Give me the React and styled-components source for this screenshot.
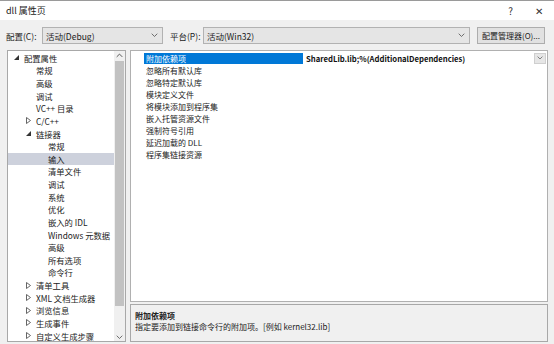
import React from "react";
import styled, { createGlobalStyle } from "styled-components";

const GlobalStyle = createGlobalStyle`
  html, body {
    margin: 0;
    padding: 0;
    overflow: hidden;
    background: #f0f0f0;
  }
  body {
    font-family: "Noto Sans CJK SC", "Noto Sans", sans-serif;
    color: #1a1a1a;
  }
`;

const Window = styled.div`
  width: 554px;
  height: 344px;
  overflow: hidden;
  display: flex;
  flex-direction: column;
  background: #f0f0f0;
  border-top: 1px solid #9a9a9a;
  box-sizing: border-box;
`;

const TitleBar = styled.div`
  height: 19px;
  flex: none;
  display: flex;
  align-items: center;
  padding: 0 11px 0 6px;
  background: #ffffff;
  font-size: 9px;
  .title {
    flex: 1;
  }
  .help {
    flex: none;
    margin-right: 22px;
    font-size: 10px;
    color: #333;
  }
  .close {
    flex: none;
    font-size: 10px;
    color: #333;
  }
`;

const ConfigRow = styled.div`
  flex: none;
  display: flex;
  align-items: center;
  height: 17px;
  margin: 7px 9px 0 6px;
  font-size: 8.5px;
  gap: 3px;
  white-space: nowrap;
`;

const Label = styled.span`
  width: ${(p) => p.$w}px;
  flex: none;
`;

const Combo = styled.div`
  width: ${(p) => p.$w}px;
  height: 17px;
  box-sizing: border-box;
  flex: none;
  display: flex;
  align-items: center;
  justify-content: space-between;
  padding: 0 4px 0 3px;
  background: #e5e5e5;
  border: 1px solid #b2b2b2;
  margin-right: 4px;
`;

const Button = styled.div`
  height: 17px;
  width: ${(p) => p.$w}px;
  box-sizing: border-box;
  display: flex;
  align-items: center;
  justify-content: center;
  background: #e1e1e1;
  border: 1px solid #adadad;
  margin-left: auto;
  font-size: 8px;
  white-space: nowrap;
`;

const Body = styled.div`
  flex: none;
  display: flex;
  gap: 4px;
  margin: 6px 6px 0 7px;
  height: 292px;
`;

const TreePanel = styled.div`
  width: 119px;
  box-sizing: border-box;
  border: 1px solid #a8a8a8;
  background: #ffffff;
  display: flex;
  overflow: hidden;
`;

const TreeList = styled.div`
  flex: 1;
  padding-top: 0.5px;
  font-size: 8.3px;
`;

const TreeRow = styled.div`
  height: 12.64px;
  display: flex;
  align-items: center;
  padding-left: ${(p) => 6 + p.$level * 12}px;
  background: ${(p) => (p.$selected ? "#cdd1dc" : "transparent")};
  white-space: nowrap;
  color: #222;
`;

const Arrow = styled.span`
  width: 10px;
  flex: none;
  display: flex;
  align-items: center;
`;

const ScrollBar = styled.div`
  width: 11px;
  flex: none;
  background: #f0f0f0;
  display: flex;
  flex-direction: column;
  align-items: center;
  padding-bottom: 2px;
  .track {
    flex: 1;
    width: 100%;
    display: flex;
    flex-direction: column;
    padding: 1px 1px;
    box-sizing: border-box;
  }
  .thumb {
    flex: 1;
    background: #c2c2c2;
    margin: 0 0 28px;
  }
`;

const RightCol = styled.div`
  flex: 1;
  display: flex;
  flex-direction: column;
  gap: 2px;
`;

const Grid = styled.div`
  height: 252px;
  box-sizing: border-box;
  border: 1px solid #b0b0b0;
  background: #ffffff;
  padding: 1px 0 0 13px;
  font-size: 8px;
`;

const GridRow = styled.div`
  height: 12px;
  display: flex;
  align-items: center;
`;

const NameCell = styled.div`
  width: 159px;
  height: 11px;
  flex: none;
  display: flex;
  align-items: center;
  padding-left: 2px;
  box-sizing: border-box;
  background: ${(p) => (p.$selected ? "#0078d7" : "transparent")};
  color: ${(p) => (p.$selected ? "#ffffff" : "#222")};
`;

const ValueCell = styled.div`
  flex: 1;
  display: flex;
  align-items: center;
  padding-left: 3px;
  font-weight: 700;
  font-size: 7.7px;
  color: #111;
`;

const DropBtn = styled.div`
  margin-left: auto;
  margin-right: 1px;
  width: 12px;
  height: 11px;
  box-sizing: border-box;
  background: #e6e6e6;
  border: 1px solid #cfcfcf;
  display: flex;
  align-items: center;
  justify-content: center;
`;

const Desc = styled.div`
  height: 38px;
  box-sizing: border-box;
  border: 1px solid #a8a8a8;
  background: #f0f0f0;
  padding: 5px 4px;
  font-size: 8px;
  line-height: 11px;
  color: #222;
  .head {
    font-weight: 700;
  }
`;

const Chevron = ({ size = 7 }) => (
  <svg width={size} height={size * 0.6} viewBox="0 0 10 6">
    <path d="M1 1 L5 5 L9 1" fill="none" stroke="#555" strokeWidth="1.2" />
  </svg>
);

const ExpandedIcon = () => (
  <svg width="5" height="5" viewBox="0 0 5 5">
    <path d="M5 0 L5 5 L0 5 Z" fill="#333" />
  </svg>
);

const CollapsedIcon = () => (
  <svg width="5" height="7" viewBox="0 0 5 7">
    <path d="M0.5 0.5 L4.5 3.5 L0.5 6.5 Z" fill="none" stroke="#555" strokeWidth="0.9" />
  </svg>
);

const treeItems = [
  { label: "配置属性", level: 0, arrow: "open" },
  { label: "常规", level: 1 },
  { label: "高级", level: 1 },
  { label: "调试", level: 1 },
  { label: "VC++ 目录", level: 1 },
  { label: "C/C++", level: 1, arrow: "closed" },
  { label: "链接器", level: 1, arrow: "open" },
  { label: "常规", level: 2 },
  { label: "输入", level: 2, selected: true },
  { label: "清单文件", level: 2 },
  { label: "调试", level: 2 },
  { label: "系统", level: 2 },
  { label: "优化", level: 2 },
  { label: "嵌入的 IDL", level: 2 },
  { label: "Windows 元数据", level: 2 },
  { label: "高级", level: 2 },
  { label: "所有选项", level: 2 },
  { label: "命令行", level: 2 },
  { label: "清单工具", level: 1, arrow: "closed" },
  { label: "XML 文档生成器", level: 1, arrow: "closed" },
  { label: "浏览信息", level: 1, arrow: "closed" },
  { label: "生成事件", level: 1, arrow: "closed" },
  { label: "自定义生成步骤", level: 1, arrow: "closed" },
];

const props = [
  { name: "附加依赖项", value: "SharedLib.lib;%(AdditionalDependencies)", selected: true },
  { name: "忽略所有默认库" },
  { name: "忽略特定默认库" },
  { name: "模块定义文件" },
  { name: "将模块添加到程序集" },
  { name: "嵌入托管资源文件" },
  { name: "强制符号引用" },
  { name: "延迟加载的 DLL" },
  { name: "程序集链接资源" },
];

export default function App() {
  return (
    <>
      <GlobalStyle />
      <Window>
        <TitleBar>
          <span className="title">dll 属性页</span>
          <span className="help">?</span>
          <span className="close">✕</span>
        </TitleBar>
        <ConfigRow>
          <Label $w={33}>配置(C):</Label>
          <Combo $w={121}>
            <span>活动(Debug)</span>
            <Chevron />
          </Combo>
          <Label $w={30}>平台(P):</Label>
          <Combo $w={267}>
            <span>活动(Win32)</span>
            <Chevron />
          </Combo>
          <Button $w={71}>配置管理器(O)...</Button>
        </ConfigRow>
        <Body>
          <TreePanel>
            <TreeList>
              {treeItems.map((it, i) => (
                <TreeRow key={i} $level={it.level} $selected={it.selected}>
                  <Arrow>
                    {it.arrow === "open" && <ExpandedIcon />}
                    {it.arrow === "closed" && <CollapsedIcon />}
                  </Arrow>
                  {it.label}
                </TreeRow>
              ))}
            </TreeList>
            <ScrollBar>
              <svg width="7" height="9" viewBox="0 0 10 10">
                <path d="M1 7 L5 3 L9 7" fill="none" stroke="#555" strokeWidth="1.4" />
              </svg>
              <div className="track">
                <div className="thumb" />
              </div>
              <Chevron />
            </ScrollBar>
          </TreePanel>
          <RightCol>
            <Grid>
              {props.map((p, i) => (
                <GridRow key={i}>
                  <NameCell $selected={p.selected}>{p.name}</NameCell>
                  {p.value && (
                    <ValueCell>
                      {p.value}
                      <DropBtn>
                        <Chevron size={6} />
                      </DropBtn>
                    </ValueCell>
                  )}
                </GridRow>
              ))}
            </Grid>
            <Desc>
              <div className="head">附加依赖项</div>
              <div>指定要添加到链接命令行的附加项。[例如 kernel32.lib]</div>
            </Desc>
          </RightCol>
        </Body>
      </Window>
    </>
  );
}
